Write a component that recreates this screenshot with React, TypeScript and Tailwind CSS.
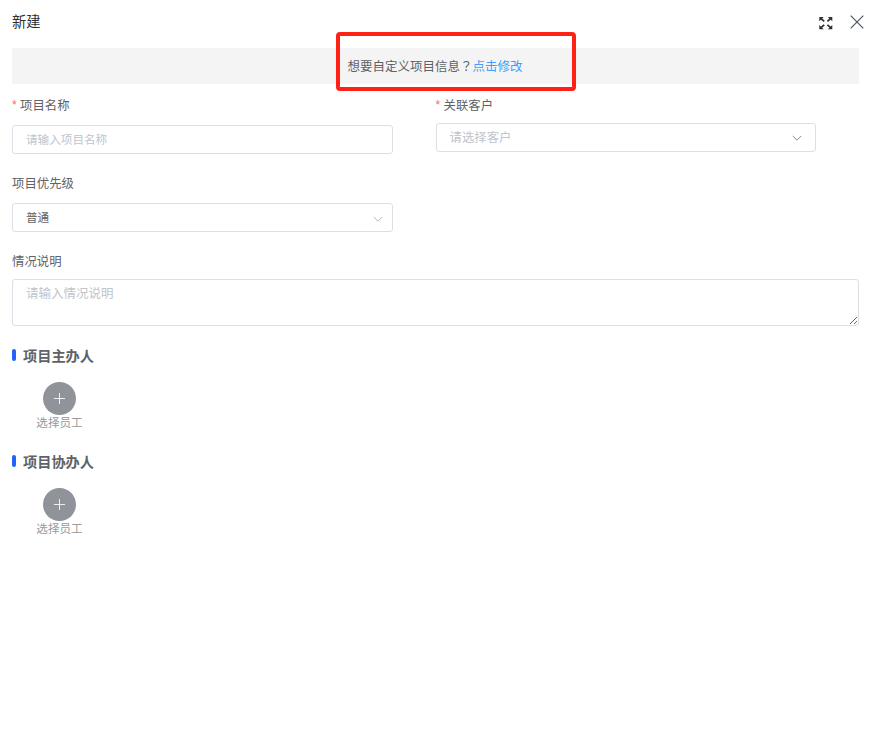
import { ReactNode, useState } from 'react';

type FieldProps = {
  label: string;
  required?: boolean;
  className?: string;
  children: ReactNode;
};

function Field({ label, required, className = '', children }: FieldProps) {
  return (
    <div className={className}>
      <div className="h-5 flex items-center text-[12.4px] leading-5 text-[#606266]">
        {required && (
          <span className="w-2 text-[#f56c6c] text-[12px] font-['Liberation_Sans',sans-serif]">*</span>
        )}
        <span>{label}</span>
      </div>
      {children}
    </div>
  );
}

function Chevron({ className }: { className: string }) {
  return (
    <svg className={className} width="12" height="12" viewBox="0 0 12 12" fill="none" stroke="currentColor">
      <path d="M1.8 4L6 8.2 10.2 4" />
    </svg>
  );
}

function ExpandIcon() {
  return (
    <svg width="14" height="14" viewBox="0 0 14 14" fill="#303133" stroke="#303133">
      <path d="M.3 1h4.400L.3 5.200zM13.300 1H8.900l4.400 4.200zM.3 13.200h4.400L.3 9zM13.300 13.200H8.900L13.300 9z" stroke="none" />
      <path d="M2 2.500l3.200 2.900M11.600 2.500L8.400 5.400M2 11.700l3.200-2.900M11.600 11.700L8.400 8.800" strokeWidth="1.700" />
    </svg>
  );
}

function CloseIcon() {
  return (
    <svg width="14" height="14" viewBox="0 0 14 14" stroke="#4a5466" strokeWidth="1.2">
      <path d="M.7.7l12.600 12.600M13.300.7L.7 13.300" />
    </svg>
  );
}

function StaffPicker({ title }: { title: string }) {
  return (
    <section className="h-[105.5px]">
      <div className="h-5 flex items-center">
        <span className="w-1 h-3 rounded-sm bg-[#2362fb] mr-[7px]" />
        <h2 className="text-[14.2px] leading-5 font-bold text-[#606266]">{title}</h2>
      </div>
      <button type="button" className="block w-[47px] mt-[17px] ml-6">
        <span className="w-[33px] h-[33px] mx-auto rounded-full bg-[#909399] flex items-center justify-center">
          <svg width="11" height="11" viewBox="0 0 11 11" stroke="#fff" strokeOpacity=".85">
            <path d="M5.5 0v11M0 5.5h11" />
          </svg>
        </span>
        <span className="block text-[11.6px] leading-[14px] text-[#999] whitespace-nowrap">选择员工</span>
      </button>
    </section>
  );
}

export default function App() {
  const [name, setName] = useState('');
  const [remark, setRemark] = useState('');

  return (
    <main className="relative w-full h-[749px] overflow-hidden bg-white pl-3 pr-4 font-['Noto_Sans_CJK_SC',sans-serif]">
      <header className="h-12 flex items-start justify-between">
        <h1 className="mt-[11px] text-[14.3px] leading-5 text-[#303133]">新建</h1>
        <div className="flex items-start gap-[17px] mt-[15px] -mr-[5px]">
          <button type="button" aria-label="全屏" className="mt-px"><ExpandIcon /></button>
          <button type="button" aria-label="关闭"><CloseIcon /></button>
        </div>
      </header>

      <div className="h-9 pr-px flex items-center justify-center bg-[#f4f4f4] text-[12.5px] text-[#606266]">
        <span>想要自定义项目信息<span lang="zh-TW" className="font-['Noto_Sans_CJK_TC',sans-serif]">？</span></span>
        <a href="#" className="text-[#409eff]">点击修改</a>
      </div>
      <div className="absolute left-[336px] top-[32px] w-[240px] h-[59px] border-4 border-[#ff2116] rounded-[4px] pointer-events-none" />

      <form>
        <div className="flex gap-[42.5px] pt-[11px]">
          <Field label="项目名称" required className="w-[381px]">
            <input
              className="block w-full h-[29px] mt-[10px] px-[13px] pb-0.5 border border-[#dcdfe6] rounded-[3px] text-[11.6px] text-[#606266] placeholder:text-[#c0c4cc] outline-none"
              value={name}
              onChange={(e) => setName(e.target.value)}
              placeholder="请输入项目名称"
            />
          </Field>
          <Field label="关联客户" required className="w-[380.5px]">
            <div className="h-[29px] mt-2 pl-[13px] pr-3 flex items-center justify-between border border-[#dcdfe6] rounded-[3px] text-[12.4px] text-[#c0c4cc]">
              <span>请选择客户</span>
              <Chevron className="text-[#85888e]" />
            </div>
          </Field>
        </div>

        <Field label="项目优先级" className="w-[381px] mt-[19px]">
          <div className="h-[29px] mt-[10px] pl-[13px] pr-2 flex items-center justify-between border border-[#dcdfe6] rounded-[3px] text-[11.6px] text-[#606266]">
            <span>普通</span>
            <Chevron className="mt-0.5 text-[#b4b8c0]" />
          </div>
        </Field>

        <Field label="情况说明" className="mt-[19px]">
          <textarea
            className="block w-full h-[47px] mt-2 px-[13px] py-1 border border-[#dcdfe6] rounded-[3px] text-[12.5px] leading-[18px] text-[#606266] placeholder:text-[#c0c4cc] outline-none resize-y"
            value={remark}
            onChange={(e) => setRemark(e.target.value)}
            placeholder="请输入情况说明"
          />
        </Field>

        <div className="pt-[19px]">
          <StaffPicker title="项目主办人" />
          <StaffPicker title="项目协办人" />
        </div>
      </form>
    </main>
  );
}
